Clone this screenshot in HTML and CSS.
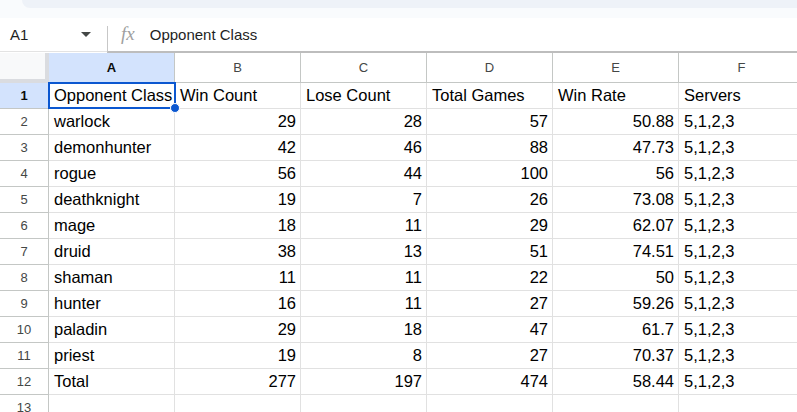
FILE: index.html
```html
<!DOCTYPE html>
<html lang="en">
<head>
    <meta charset="UTF-8">
    <title>Opponent Class stats</title>
    <link rel="stylesheet" href="styles.css">
</head>
<body>
    <div class="topband"><div class="toolbar"></div></div>

    <div class="formula-bar">
        <div class="namebox">
            <span class="cellref">A1</span>
            <span class="caret"></span>
        </div>
        <div class="formula">
            <span class="fx">fx</span>
            <span class="formula-text">Opponent Class</span>
        </div>
    </div>

    <div class="sheet">
        <div class="corner"></div>
        <div class="colhead active">A</div>
        <div class="colhead">B</div>
        <div class="colhead">C</div>
        <div class="colhead">D</div>
        <div class="colhead">E</div>
        <div class="colhead">F</div>

        <div class="rowhead active">1</div>
        <div class="cell selected">Opponent Class<span class="handle"></span></div>
        <div class="cell">Win Count</div>
        <div class="cell">Lose Count</div>
        <div class="cell">Total Games</div>
        <div class="cell">Win Rate</div>
        <div class="cell">Servers</div>

        <div class="rowhead">2</div>
        <div class="cell">warlock</div><div class="cell num">29</div><div class="cell num">28</div><div class="cell num">57</div><div class="cell num">50.88</div><div class="cell">5,1,2,3</div>
        <div class="rowhead">3</div>
        <div class="cell">demonhunter</div><div class="cell num">42</div><div class="cell num">46</div><div class="cell num">88</div><div class="cell num">47.73</div><div class="cell">5,1,2,3</div>
        <div class="rowhead">4</div>
        <div class="cell">rogue</div><div class="cell num">56</div><div class="cell num">44</div><div class="cell num">100</div><div class="cell num">56</div><div class="cell">5,1,2,3</div>
        <div class="rowhead">5</div>
        <div class="cell">deathknight</div><div class="cell num">19</div><div class="cell num">7</div><div class="cell num">26</div><div class="cell num">73.08</div><div class="cell">5,1,2,3</div>
        <div class="rowhead">6</div>
        <div class="cell">mage</div><div class="cell num">18</div><div class="cell num">11</div><div class="cell num">29</div><div class="cell num">62.07</div><div class="cell">5,1,2,3</div>
        <div class="rowhead">7</div>
        <div class="cell">druid</div><div class="cell num">38</div><div class="cell num">13</div><div class="cell num">51</div><div class="cell num">74.51</div><div class="cell">5,1,2,3</div>
        <div class="rowhead">8</div>
        <div class="cell">shaman</div><div class="cell num">11</div><div class="cell num">11</div><div class="cell num">22</div><div class="cell num">50</div><div class="cell">5,1,2,3</div>
        <div class="rowhead">9</div>
        <div class="cell">hunter</div><div class="cell num">16</div><div class="cell num">11</div><div class="cell num">27</div><div class="cell num">59.26</div><div class="cell">5,1,2,3</div>
        <div class="rowhead">10</div>
        <div class="cell">paladin</div><div class="cell num">29</div><div class="cell num">18</div><div class="cell num">47</div><div class="cell num">61.7</div><div class="cell">5,1,2,3</div>
        <div class="rowhead">11</div>
        <div class="cell">priest</div><div class="cell num">19</div><div class="cell num">8</div><div class="cell num">27</div><div class="cell num">70.37</div><div class="cell">5,1,2,3</div>
        <div class="rowhead">12</div>
        <div class="cell">Total</div><div class="cell num">277</div><div class="cell num">197</div><div class="cell num">474</div><div class="cell num">58.44</div><div class="cell">5,1,2,3</div>
        <div class="rowhead">13</div>
        <div class="cell"></div><div class="cell"></div><div class="cell"></div><div class="cell"></div><div class="cell"></div><div class="cell"></div>
    </div>
</body>
</html>
```

FILE: styles.css
```css
body {
    margin: 0;
    width: 797px;
    height: 412px;
    overflow: hidden;
    background: #ffffff;
    font-family: "Liberation Sans", Arial, sans-serif;
    color: #000000;
}

/* bande grise du haut */
.topband {
    height: 18px;
    background: #f9fbfd;
}

.toolbar {
    margin-left: 22px;
    height: 8px;
    background: #eef2f8;
    border-radius: 0 0 0 14px;
}

/* barre de formule */
.formula-bar {
    display: flex;
    align-items: flex-start;
    height: 35px;
}

.namebox {
    width: 107px;
    height: 34px;
    display: flex;
    align-items: center;
    justify-content: space-between;
    padding: 0 16px 0 10px;
    box-sizing: border-box;
    border-bottom: 1px solid #e3e3e3;
}

.cellref {
    font-size: 15px;
    color: #1f1f1f;
}

.caret {
    width: 0;
    height: 0;
    border-left: 5px solid transparent;
    border-right: 5px solid transparent;
    border-top: 5px solid #444746;
}

.formula {
    flex: 1;
    display: flex;
    align-items: center;
    margin-top: 8px;
    padding-left: 13px;
    height: 25px;
    border-left: 1px solid #c7c7c7;
    border-bottom: 2px solid #bdbdbd;
}

.fx {
    font-family: "Liberation Serif", serif;
    font-style: italic;
    font-size: 19px;
    color: #a0a0a0;
    margin-right: 15px;
    margin-top: -9px;
}

.formula-text {
    font-size: 15px;
    color: #1f1f1f;
    margin-top: -9px;
}

/* grille */
.sheet {
    display: grid;
    grid-template-columns: 49px repeat(6, 126px);
    grid-template-rows: 30px repeat(13, 26px);
}

.corner {
    background: #f8f9fa;
    border-right: 4px solid #dadce0;
    border-bottom: 4px solid #dadce0;
    box-sizing: border-box;
}

.colhead,
.rowhead {
    display: flex;
    align-items: center;
    justify-content: center;
    font-size: 13px;
    color: #444746;
    border-right: 1px solid #c4c7c5;
    border-bottom: 1px solid #c4c7c5;
}

.colhead.active,
.rowhead.active {
    background: #d3e3fd;
    color: #0b0b0b;
    font-weight: bold;
}

.cell {
    position: relative;
    display: flex;
    align-items: center;
    padding: 0 4px 0 5px;
    font-size: 16.5px;
    white-space: nowrap;
    border-right: 1px solid #e1e1e1;
    border-bottom: 1px solid #e1e1e1;
}

.cell.num {
    justify-content: flex-end;
}

.cell.selected {
    z-index: 2;
}

.cell.selected::after {
    content: "";
    position: absolute;
    left: -1px;
    top: -1px;
    right: -2px;
    bottom: -1px;
    border: 2px solid #0b57d0;
}

.handle {
    position: absolute;
    right: -6px;
    bottom: -5px;
    width: 8px;
    height: 8px;
    border-radius: 50%;
    background: #0b57d0;
    border: 1px solid #ffffff;
    z-index: 3;
}
```
